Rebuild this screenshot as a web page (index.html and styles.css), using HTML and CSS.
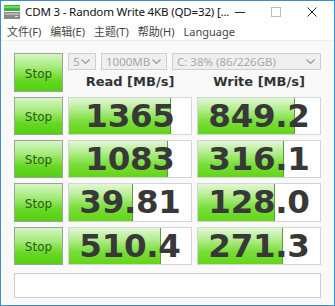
FILE: index.html
```html
<!DOCTYPE html>
<html>
<head>
<meta charset="utf-8">
<link rel="stylesheet" href="styles.css">
</head>
<body>
<div class="win">
  <div class="titlebar">
    <svg class="appicon" width="16" height="14" viewBox="0 0 16 14">
      <rect x="0" y="0" width="16" height="6" fill="#3cb43c"/>
      <rect x="0" y="1" width="16" height="2" fill="#6fd66f"/>
      <rect x="0" y="7" width="16" height="7" fill="#8a8a8a"/>
      <rect x="1" y="8" width="14" height="2" fill="#b5b5b5"/>
      <rect x="11" y="11" width="3" height="1" fill="#e0e0e0"/>
    </svg>
    <span class="title">CDM 3 - Random Write 4KB (QD=32) [...</span>
    <div class="ctrls">
      <svg class="ctl" width="10" height="10" viewBox="0 0 10 10"><line x1="0" y1="5.5" x2="10" y2="5.5" stroke="#222" stroke-width="1"/></svg>
      <svg class="ctl" width="10" height="10" viewBox="0 0 10 10"><rect x="0.5" y="0.5" width="9" height="9" fill="none" stroke="#bbb" stroke-width="1"/></svg>
      <svg class="ctl" width="10" height="10" viewBox="0 0 10 10"><path d="M0.5 0.5 L9.5 9.5 M9.5 0.5 L0.5 9.5" stroke="#222" stroke-width="1"/></svg>
    </div>
  </div>
  <div class="menubar">
    <span class="mi">文件(F)</span>
    <span class="mi">编辑(E)</span>
    <span class="mi">主题(T)</span>
    <span class="mi">帮助(H)</span>
    <span class="mi">Language</span>
  </div>
  <div class="content">
    <div class="grid">
      <div class="stop">Stop</div>
      <div class="topctl">
        <div class="selects">
          <div class="sel s1"><span>5</span><svg width="9" height="6" viewBox="0 0 9 6"><path d="M0.5 0.5 L4.5 4.5 L8.5 0.5" fill="none" stroke="#999" stroke-width="1.2"/></svg></div>
          <div class="sel s2"><span>1000MB</span><svg width="9" height="6" viewBox="0 0 9 6"><path d="M0.5 0.5 L4.5 4.5 L8.5 0.5" fill="none" stroke="#999" stroke-width="1.2"/></svg></div>
          <div class="sel s3"><span>C: 38% (86/226GB)</span><svg width="9" height="6" viewBox="0 0 9 6"><path d="M0.5 0.5 L4.5 4.5 L8.5 0.5" fill="none" stroke="#999" stroke-width="1.2"/></svg></div>
        </div>
        <div class="heads">
          <div class="head">Read [MB/s]</div>
          <div class="head">Write [MB/s]</div>
        </div>
      </div>

      <div class="stop">Stop</div>
      <div class="val"><div class="fill" style="width:82.7%"></div><span>1365</span></div>
      <div class="val"><div class="fill" style="width:78.6%"></div><span>849.2</span></div>

      <div class="stop">Stop</div>
      <div class="val"><div class="fill" style="width:80.7%"></div><span>1083</span></div>
      <div class="val"><div class="fill" style="width:70.0%"></div><span>316.1</span></div>

      <div class="stop">Stop</div>
      <div class="val"><div class="fill" style="width:52.0%"></div><span>39.81</span></div>
      <div class="val"><div class="fill" style="width:62.1%"></div><span>128.0</span></div>

      <div class="stop">Stop</div>
      <div class="val"><div class="fill" style="width:74.2%"></div><span>510.4</span></div>
      <div class="val"><div class="fill" style="width:68.7%"></div><span>271.3</span></div>
    </div>
    <div class="comment"></div>
  </div>
</div>
</body>
</html>
```
FILE: styles.css
```css
html, body {
  margin: 0;
  padding: 0;
  background: #ffffff;
}
.win {
  width: 335px;
  height: 306px;
  box-sizing: border-box;
  border: 1px solid #3d8ccf;
  background: #ffffff;
  font-family: "Noto Sans", "Noto Sans CJK SC", sans-serif;
  overflow: hidden;
}
.titlebar {
  height: 21px;
  display: flex;
  align-items: center;
  background: #ffffff;
}
.appicon {
  margin-left: 3px;
  margin-right: 5px;
  margin-top: 1px;
}
.title {
  font-size: 11.6px;
  color: #111;
  letter-spacing: -0.2px;
  white-space: nowrap;
}
.ctrls {
  margin-left: auto;
  display: flex;
  gap: 26px;
  margin-right: 17px;
  align-items: center;
}
.ctl { display: block; }
.menubar {
  height: 18px;
  display: flex;
  align-items: center;
  padding-left: 6px;
  background: #ffffff;
}
.mi {
  font-size: 11px;
  color: #444;
  margin-right: 9px;
  white-space: nowrap;
}
.content {
  background: #f9f9f9;
  border-top: 1px solid #eeeeee;
  padding: 12px 13px 0 13px;
  height: 264px;
  box-sizing: border-box;
}
.grid {
  display: grid;
  grid-template-columns: 49px 124px 124px;
  grid-template-rows: 39px 38px 38px 39px 38px;
  column-gap: 5px;
  row-gap: 5px;
}
.stop {
  box-sizing: border-box;
  border: 1px solid #9aa59a;
  background: linear-gradient(to bottom, #d6f5c4 0%, #a6ec7c 35%, #66d824 70%, #54d010 100%);
  display: flex;
  align-items: center;
  justify-content: center;
  font-family: "DejaVu Sans", sans-serif;
  font-size: 12px;
  color: #2d5a12;
  padding-top: 2px;
}
.topctl {
  grid-column: 2 / 4;
  display: flex;
  flex-direction: column;
}
.selects {
  display: flex;
  gap: 5px;
  height: 17px;
}
.sel {
  box-sizing: border-box;
  border: 1px solid #cfcfcf;
  background: #efefef;
  display: flex;
  align-items: center;
  justify-content: space-between;
  padding: 0 5px 0 4px;
  font-family: "Noto Sans", sans-serif;
  font-size: 11.5px;
  color: #a8a8a8;
}
.sel svg { display: block; }
.s1 { width: 28px; }
.s2 { width: 66px; }
.s3 { width: 149px; }
.heads {
  display: flex;
  gap: 5px;
  flex: 1;
}
.head {
  width: 124px;
  text-align: center;
  font-family: "DejaVu Sans", sans-serif;
  font-weight: bold;
  font-size: 13px;
  color: #333;
  padding-top: 4px;
}
.val {
  position: relative;
  box-sizing: border-box;
  border: 1px solid #d4d4d4;
  background: #ffffff;
  display: flex;
  align-items: center;
  justify-content: center;
}
.fill {
  position: absolute;
  left: 0;
  top: 0;
  bottom: 0;
  background: linear-gradient(to bottom, #e2f7d6 0%, #b6ee92 30%, #7ade3a 65%, #62d616 100%);
  border-right: 1px solid #5c9c3a;
}
.val span {
  position: relative;
  font-family: "DejaVu Sans", sans-serif;
  font-weight: bold;
  font-size: 32.5px;
  color: #383838;
  line-height: 36px;
  letter-spacing: -0.3px;
  margin-top: -1px;
}
.comment {
  margin-top: 8px;
  height: 25px;
  box-sizing: border-box;
  border: 1px solid #cfcfcf;
  background: #ffffff;
  width: 307px;
}
```
